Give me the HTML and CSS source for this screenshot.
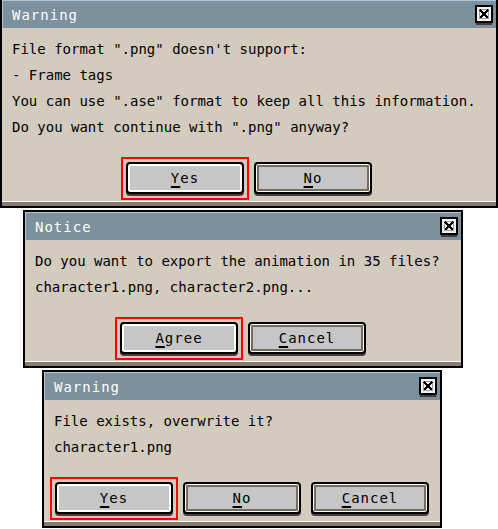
FILE: index.html
```html
<!DOCTYPE html>
<html>
<head>
<meta charset="utf-8">
<title>Dialogs</title>
<link rel="stylesheet" href="styles.css">
</head>
<body>
<div class="stack">
  <section class="dialog d1">
    <header class="titlebar">
      <span class="title">Warning</span>
      <span class="close"><svg width="18" height="20" viewBox="0 0 18 20" shape-rendering="crispEdges"><rect x="1" y="2" width="16" height="18" fill="#4a3a3c"/><rect x="0" y="0" width="18" height="18" fill="#000"/><rect x="2" y="2" width="14" height="14" fill="#f2f2f2"/><rect x="4.5" y="4.5" width="9" height="9" fill="none" stroke="#9c9c9c" stroke-width="1"/><path d="M5 5 L13 13 M13 5 L5 13" stroke="#000" stroke-width="2"/></svg></span>
    </header>
    <div class="content">
      <p class="line">File format ".png" doesn't support:</p>
      <p class="line">- Frame tags</p>
      <p class="line">You can use ".ase" format to keep all this information.</p>
      <p class="line">Do you want continue with ".png" anyway?</p>
      <div class="buttons">
        <button class="btn focus"><span class="mn">Y</span>es</button>
        <button class="btn"><span class="mn">N</span>o</button>
      </div>
    </div>
  </section>

  <section class="dialog d2">
    <header class="titlebar">
      <span class="title">Notice</span>
      <span class="close"><svg width="18" height="20" viewBox="0 0 18 20" shape-rendering="crispEdges"><rect x="1" y="2" width="16" height="18" fill="#4a3a3c"/><rect x="0" y="0" width="18" height="18" fill="#000"/><rect x="2" y="2" width="14" height="14" fill="#f2f2f2"/><rect x="4.5" y="4.5" width="9" height="9" fill="none" stroke="#9c9c9c" stroke-width="1"/><path d="M5 5 L13 13 M13 5 L5 13" stroke="#000" stroke-width="2"/></svg></span>
    </header>
    <div class="content">
      <p class="line">Do you want to export the animation in 35 files?</p>
      <p class="line">character1.png, character2.png...</p>
      <div class="buttons">
        <button class="btn focus"><span class="mn">A</span>gree</button>
        <button class="btn"><span class="mn">C</span>ancel</button>
      </div>
    </div>
  </section>

  <section class="dialog d3">
    <header class="titlebar">
      <span class="title">Warning</span>
      <span class="close"><svg width="18" height="20" viewBox="0 0 18 20" shape-rendering="crispEdges"><rect x="1" y="2" width="16" height="18" fill="#4a3a3c"/><rect x="0" y="0" width="18" height="18" fill="#000"/><rect x="2" y="2" width="14" height="14" fill="#f2f2f2"/><rect x="4.5" y="4.5" width="9" height="9" fill="none" stroke="#9c9c9c" stroke-width="1"/><path d="M5 5 L13 13 M13 5 L5 13" stroke="#000" stroke-width="2"/></svg></span>
    </header>
    <div class="content">
      <p class="line">File exists, overwrite it?</p>
      <p class="line">character1.png</p>
      <div class="buttons">
        <button class="btn focus"><span class="mn">Y</span>es</button>
        <button class="btn"><span class="mn">N</span>o</button>
        <button class="btn"><span class="mn">C</span>ancel</button>
      </div>
    </div>
  </section>
</div>
</body>
</html>
```

FILE: styles.css
```css
* {
  box-sizing: border-box;
  margin: 0;
  padding: 0;
}

html, body {
  background: #ffffff;
}

body {
  font-family: "DejaVu Sans Mono", monospace;
  font-size: 14px;
  color: #000000;
}

.stack {
  display: flex;
  flex-direction: column;
  align-items: flex-start;
  gap: 2px;
}

.dialog {
  border: 2px solid #000000;
  background: #d3cbbe;
}

.d1 {
  width: 498px;
  margin-top: -2px;
}

.d2 {
  width: 440px;
  margin-left: 23px;
}

.d3 {
  width: 400px;
  margin-left: 42px;
}

.titlebar {
  height: 28px;
  background: #7c909d;
  box-shadow: inset 1px 1px 0 #a9c7d8;
  display: flex;
  align-items: center;
  justify-content: space-between;
  padding: 0 3px 0 10px;
  color: #ffffff;
}

.title {
  letter-spacing: 1px;
  padding-top: 1px;
}

.close {
  display: flex;
  padding-top: 2px;
}

.content {
  padding: 8px 10px 8px;
  border-bottom: 4px solid #8a796d;
  box-shadow: inset 0 -1px 0 #ffffff;
}

.line {
  height: 26px;
  line-height: 26px;
  white-space: nowrap;
}

.buttons {
  display: flex;
  justify-content: center;
  gap: 10px;
  margin-top: 22px;
}

.btn {
  position: relative;
  width: 118px;
  height: 32px;
  border: 2px solid #000000;
  border-radius: 4px;
  background: #c6c6c6;
  font: inherit;
  letter-spacing: 1px;
  color: #000000;
  box-shadow: inset 0 0 0 1px #ffffff, inset 0 0 0 3px #7b695d, 0 2px 0 #4a3c3c;
  display: flex;
  align-items: center;
  justify-content: center;
}

.btn.focus {
  box-shadow: inset 0 0 0 2px #ffffff, 0 2px 0 #4a3c3c;
}

.btn.focus::after {
  content: "";
  position: absolute;
  left: -7px;
  right: -7px;
  top: -7px;
  bottom: -8px;
  border: 2px solid #ff0000;
}

.mn {
  text-decoration: underline;
  text-decoration-thickness: 2px;
  text-underline-offset: 3px;
}
```
